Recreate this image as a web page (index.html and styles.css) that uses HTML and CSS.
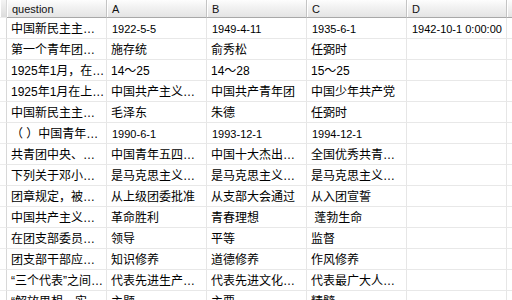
FILE: index.html
```html
<!DOCTYPE html>
<html>
<head>
<meta charset="utf-8">
<link rel="stylesheet" href="styles.css">
</head>
<body>
<div class="grid">
  <div class="hd gut"></div><div class="hd">question</div><div class="hd">A</div><div class="hd">B</div><div class="hd">C</div><div class="hd">D</div><div class="hd"></div>

  <div class="gut"></div><div class="c">中国新民主主…</div><div class="c num">1922-5-5</div><div class="c num">1949-4-11</div><div class="c num">1935-6-1</div><div class="c num">1942-10-1 0:00:00</div><div class="c num">B</div>
  <div class="gut"></div><div class="c">第一个青年团…</div><div class="c">施存统</div><div class="c">俞秀松</div><div class="c">任弼时</div><div class="c"></div><div class="c"></div>
  <div class="gut"></div><div class="c">1925年1月，在…</div><div class="c">14～25</div><div class="c">14～28</div><div class="c">15～25</div><div class="c"></div><div class="c num">A</div>
  <div class="gut"></div><div class="c">1925年1月在上…</div><div class="c">中国共产主义…</div><div class="c">中国共产青年团</div><div class="c">中国少年共产党</div><div class="c"></div><div class="c num">A</div>
  <div class="gut"></div><div class="c">中国新民主主…</div><div class="c">毛泽东</div><div class="c">朱德</div><div class="c">任弼时</div><div class="c"></div><div class="c num">C</div>
  <div class="gut"></div><div class="c">（ ）中国青年…</div><div class="c num">1990-6-1</div><div class="c num">1993-12-1</div><div class="c num">1994-12-1</div><div class="c"></div><div class="c num">C</div>
  <div class="gut"></div><div class="c">共青团中央、…</div><div class="c">中国青年五四…</div><div class="c">中国十大杰出…</div><div class="c">全国优秀共青…</div><div class="c"></div><div class="c num">A</div>
  <div class="gut"></div><div class="c">下列关于邓小…</div><div class="c">是马克思主义…</div><div class="c">是马克思主义…</div><div class="c">是马克思主义…</div><div class="c"></div><div class="c"></div>
  <div class="gut"></div><div class="c">团章规定，被…</div><div class="c">从上级团委批准</div><div class="c">从支部大会通过</div><div class="c">从入团宣誓</div><div class="c"></div><div class="c num">B</div>
  <div class="gut"></div><div class="c">中国共产主义…</div><div class="c">革命胜利</div><div class="c">青春理想</div><div class="c">&nbsp;蓬勃生命</div><div class="c"></div><div class="c num">A</div>
  <div class="gut"></div><div class="c">在团支部委员…</div><div class="c">领导</div><div class="c">平等</div><div class="c">监督</div><div class="c"></div><div class="c num">B</div>
  <div class="gut"></div><div class="c">团支部干部应…</div><div class="c">知识修养</div><div class="c">道德修养</div><div class="c">作风修养</div><div class="c"></div><div class="c num">C</div>
  <div class="gut"></div><div class="c">“三个代表”之间…</div><div class="c">代表先进生产…</div><div class="c">代表先进文化…</div><div class="c">代表最广大人…</div><div class="c"></div><div class="c num">A</div>
  <div class="gut"></div><div class="c">“解放思想，实…</div><div class="c">主题</div><div class="c">主要</div><div class="c">精髓</div><div class="c"></div><div class="c"></div>
</div>
</body>
</html>
```

FILE: styles.css
```css
html, body {
  margin: 0;
  padding: 0;
  background: #ffffff;
  overflow: hidden;
}
.grid {
  display: grid;
  grid-template-columns: 7px repeat(6, 100px);
  grid-template-rows: 18px;
  grid-auto-rows: 21px;
  font-family: "Liberation Sans", "Noto Sans CJK SC", sans-serif;
  font-size: 12px;
  color: #000;
  width: 700px;
}
.hd {
  box-sizing: border-box;
  background: linear-gradient(#fdfdfd, #f1f1f1 45%, #e4e4e4);
  border-right: 1px solid #c4c4c4;
  border-bottom: 1px solid #a8a8a8;
  box-shadow: inset 1px 0 0 #ffffff;
  font-size: 11px;
  line-height: 18px;
  padding-left: 5px;
  color: #111;
  white-space: nowrap;
  overflow: hidden;
}
.hd.gut {
  padding: 0;
  background: linear-gradient(#f4f4f4, #dcdcdc);
}
.gut {
  box-sizing: border-box;
  border-right: 1px solid #d8d8d8;
  border-bottom: 1px solid #ececec;
}
.c {
  box-sizing: border-box;
  border-right: 1px solid #e6e6e6;
  border-bottom: 1px solid #e8e8e8;
  padding-left: 4px;
  line-height: 22px;
  white-space: pre;
  overflow: hidden;
}
.num {
  font-size: 11px;
  padding-left: 5px;
}
```
